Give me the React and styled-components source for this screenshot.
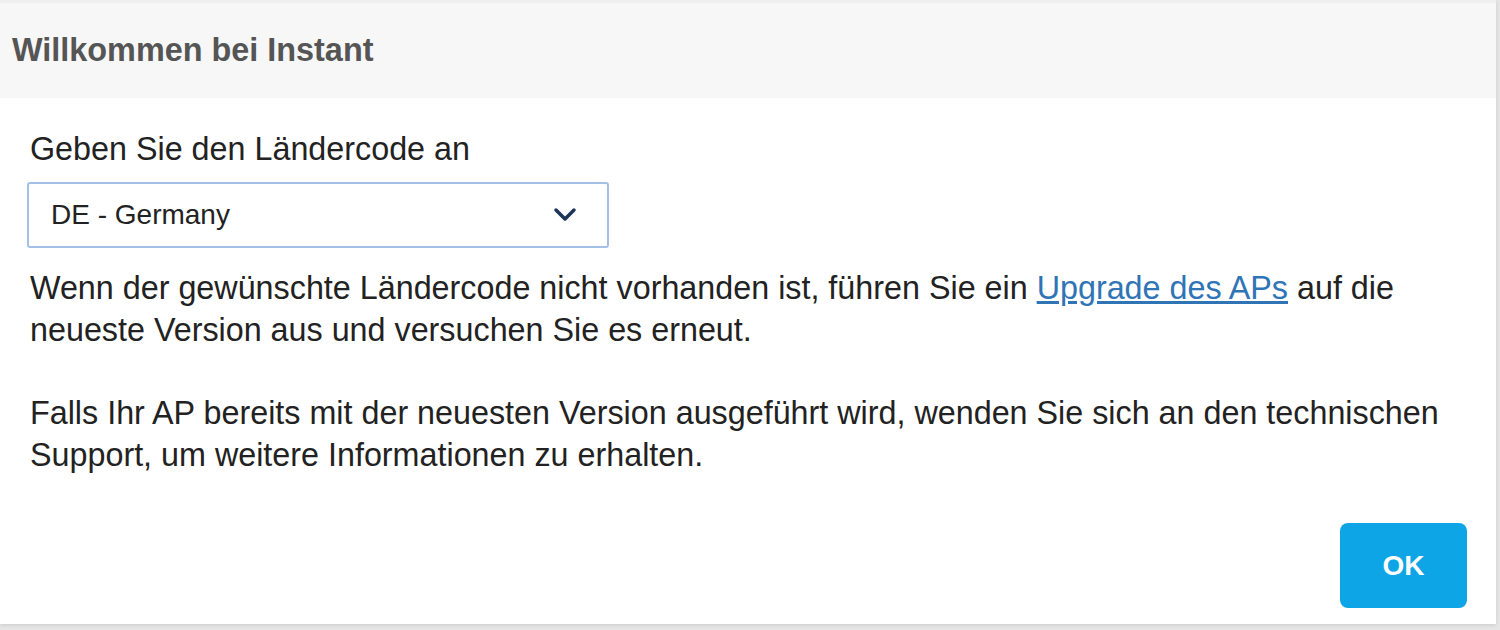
import React from 'react';
import styled, { createGlobalStyle } from 'styled-components';

const Global = createGlobalStyle`
  html, body {
    margin: 0;
    padding: 0;
    background: #e6e6e6;
  }
  body {
    font-family: "Liberation Sans", Arial, sans-serif;
    color: #333;
  }
`;

export default function App() {
  return (
    <>
      <Global />
      <Page>
        <Dialog>
          <Header>
            <Title>Willkommen bei Instant</Title>
          </Header>
          <Body>
            <Label htmlFor="country">Geben Sie den Ländercode an</Label>
            <SelectBox id="country">
              <span>DE - Germany</span>
              <Chevron viewBox="0 0 24 16" aria-hidden="true">
                <path d="M3 3 L12 12 L21 3" />
              </Chevron>
            </SelectBox>
            <Paragraph>
              Wenn der gewünschte Ländercode nicht vorhanden ist, führen Sie ein{' '}
              <Link href="#">Upgrade des APs</Link> auf die neueste Version aus und
              versuchen Sie es erneut.
            </Paragraph>
            <Paragraph>
              Falls Ihr AP bereits mit der neuesten Version ausgeführt wird, wenden
              Sie sich an den technischen Support, um weitere Informationen zu
              erhalten.
            </Paragraph>
          </Body>
          <Footer>
            <OkButton>OK</OkButton>
          </Footer>
        </Dialog>
      </Page>
    </>
  );
}

const Page = styled.div`
  width: 1500px;
  height: 630px;
  overflow: hidden;
`;

const Dialog = styled.div`
  width: 1496px;
  height: 624px;
  background: #fff;
  display: flex;
  flex-direction: column;
  box-shadow: 0 1px 4px rgba(0, 0, 0, 0.12);
`;

const Header = styled.div`
  height: 98px;
  box-sizing: border-box;
  background: #f7f7f7;
  display: flex;
  align-items: center;
  padding: 0 12px;
  border-top: 3px solid #efefef;
`;

const Title = styled.h1`
  margin: 0;
  font-size: 32.4px;
  font-weight: 700;
  color: #555;
`;

const Body = styled.div`
  padding: 30px 30px 0 30px;
  display: flex;
  flex-direction: column;
`;

const Label = styled.label`
  font-size: 32.3px;
  line-height: 42px;
  color: #222;
`;

const SelectBox = styled.div`
  margin: 12px 0 0 -3px;
  width: 582px;
  height: 66px;
  box-sizing: border-box;
  border: 2px solid #a5bfe6;
  border-radius: 3px;
  display: flex;
  align-items: center;
  justify-content: space-between;
  padding: 0 30px 0 22px;
  font-size: 28px;
  color: #222;
`;

const Chevron = styled.svg`
  width: 24px;
  height: 16px;
  fill: none;
  stroke: #1d3557;
  stroke-width: 3.5;
  stroke-linecap: round;
  stroke-linejoin: round;
`;

const Paragraph = styled.p`
  margin: 19px 0 41px;
  font-size: 32.3px;
  line-height: 42px;
  color: #222;
  & + & {
    margin-top: 0;
  }
`;

const Link = styled.a`
  color: #2f74b5;
  text-decoration: underline;
`;

const Footer = styled.div`
  margin-top: auto;
  display: flex;
  justify-content: flex-end;
  padding: 0 29px 16px 0;
`;

const OkButton = styled.button`
  width: 127px;
  height: 85px;
  border: none;
  border-radius: 8px;
  background: #0ea5e6;
  color: #fff;
  font-family: "Liberation Sans", Arial, sans-serif;
  font-size: 28px;
  font-weight: 700;
  cursor: pointer;
`;
